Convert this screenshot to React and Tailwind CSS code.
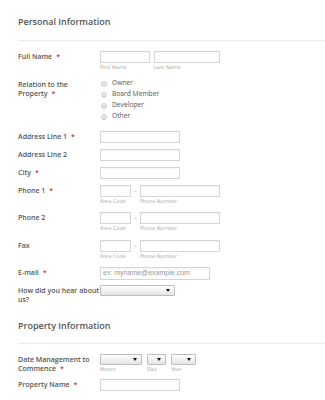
import React from 'react';

const lbl = "w-[82px] shrink-0 whitespace-nowrap text-[7px] leading-[9px] font-semibold text-[#555] font-['Open_Sans',sans-serif]";
const inp = "h-[12px] border border-[#d6d6d6] bg-white shadow-[inset_0_1px_1px_rgba(0,0,0,0.04)]";
const sub = "text-[5px] leading-[7px] text-[#aaa] mt-[1px]";

function Req() {
  return <span className="text-[#c0394b] ml-[4px]">*</span>;
}

function Sel({ w }) {
  return (
    <div className={"h-[11px] border border-[#bdbdbd] rounded-[1px] bg-gradient-to-b from-white to-[#e4e4e4] flex items-center justify-end pr-[4px] " + w}>
      <svg width="4" height="3" viewBox="0 0 4 3"><path d="M0 0h4L2 3z" fill="#111" /></svg>
    </div>
  );
}

function Row({ h, label, req, children, mt = '' }) {
  return (
    <div className={"flex " + h + " " + mt}>
      <div className={lbl + " pt-[1px]"}>{label}{req && <Req />}</div>
      <div>{children}</div>
    </div>
  );
}

function Phone() {
  return (
    <div className="flex">
      <div>
        <div className={inp + " w-[31px]"} />
        <div className={sub}>Area Code</div>
      </div>
      <div className="w-[9px] text-center text-[7px] leading-[12px] text-[#999]">-</div>
      <div>
        <div className={inp + " w-[80px]"} />
        <div className={sub}>Phone Number</div>
      </div>
    </div>
  );
}

function Section({ title, top }) {
  return (
    <div className={"border-b border-[#ececec] flex items-center " + top}>
      <div className="text-[9px] leading-[12px] font-semibold text-[#555] font-['Open_Sans',sans-serif]">{title}</div>
    </div>
  );
}

export default function App() {
  return (
    <div className="w-[325px] h-[400px] overflow-hidden bg-white font-['DejaVu_Sans',sans-serif]">
      <div className="ml-[18px]">
        <Section title="Personal Information" top="h-[41px] pt-[4px]" />

        <Row h="h-[28px]" mt="mt-[10px]" label="Full Name" req>
          <div className="flex gap-[4px]">
            <div>
              <div className={inp + " w-[50px]"} />
              <div className={sub}>First Name</div>
            </div>
            <div>
              <div className={inp + " w-[66px]"} />
              <div className={sub}>Last Name</div>
            </div>
          </div>
        </Row>

        <div className="flex h-[52px]">
          <div className={lbl + " pt-[1px]"}>Relation to the<br />Property<Req /></div>
          <div className="-mt-[1px]">
            {['Owner', 'Board Member', 'Developer', 'Other'].map(o => (
              <div key={o} className="h-[11px] flex items-center gap-[5px] pl-[1px]">
                <span className="w-[6px] h-[6px] rounded-full border border-[#cfcfcf] bg-gradient-to-b from-[#f2f2f2] to-[#d8d8d8]" />
                <span className="text-[6.7px] text-[#555] font-['Open_Sans',sans-serif]">{o}</span>
              </div>
            ))}
          </div>
        </div>

        <Row h="h-[18px]" label="Address Line 1" req><div className={inp + " w-[80px]"} /></Row>
        <Row h="h-[18px]" label="Address Line 2"><div className={inp + " w-[80px]"} /></Row>
        <Row h="h-[18px]" label="City" req><div className={inp + " w-[80px]"} /></Row>
        <Row h="h-[27px]" label="Phone 1" req><Phone /></Row>
        <Row h="h-[28px]" label="Phone 2"><Phone /></Row>
        <Row h="h-[27px]" label="Fax"><Phone /></Row>
        <Row h="h-[18px]" label="E-mail" req>
          <div className={inp + " w-[110px] h-[13px] flex items-center pl-[2px] text-[7px] text-[#999] font-['Liberation_Sans',sans-serif]"}>ex: myname@example.com</div>
        </Row>
        <div className="flex h-[24px]">
          <div className={lbl + " pt-[1px]"}>How did you hear about<br />us?</div>
          <Sel w="w-[75px]" />
        </div>

        <Section title="Property Information" top="h-[35px] pt-[0px]" />

        <Row h="h-[25px]" mt="mt-[10px]" label={<>Date Management to<br />Commence</>} req>
          <div className="flex">
            <div className="w-[47px]"><Sel w="w-[42px]" /><div className={sub}>Month</div></div>
            <div className="w-[24px]"><Sel w="w-[19px]" /><div className={sub}>Day</div></div>
            <div><Sel w="w-[25px]" /><div className={sub}>Year</div></div>
          </div>
        </Row>
        <Row h="h-[18px]" label="Property Name" req><div className={inp + " w-[80px]"} /></Row>
      </div>
    </div>
  );
}
